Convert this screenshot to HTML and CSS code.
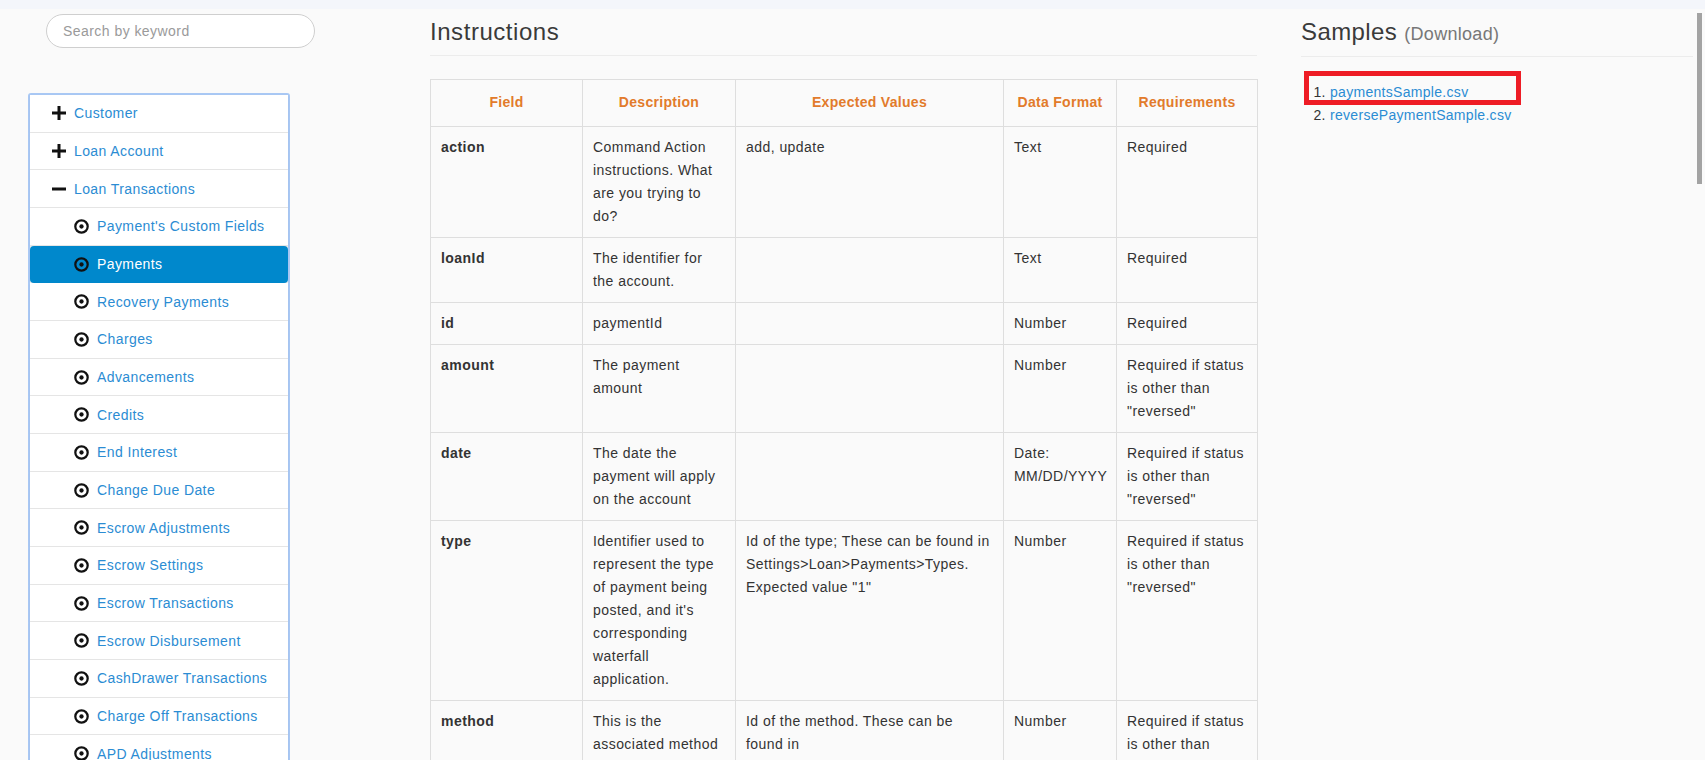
FILE: index.html
```html
<!DOCTYPE html>
<html lang="en">
<head>
<meta charset="utf-8">
<title>Payments - Import Instructions</title>
<link rel="stylesheet" href="styles.css">
</head>
<body>
<div class="topbar"></div>
<div class="layout">
  <aside class="sidebar">
    <input class="search" type="text" placeholder="Search by keyword">
    <ul class="nav">
      <li class="item top"><svg class="ico" width="14" height="14" viewBox="0 0 14 14"><rect x="5.5" y="0" width="3" height="14" fill="#111"/><rect x="0" y="5.5" width="14" height="3" fill="#111"/></svg><span>Customer</span></li>
      <li class="item top"><svg class="ico" width="14" height="14" viewBox="0 0 14 14"><rect x="5.5" y="0" width="3" height="14" fill="#111"/><rect x="0" y="5.5" width="14" height="3" fill="#111"/></svg><span>Loan Account</span></li>
      <li class="item top"><svg class="ico" width="14" height="14" viewBox="0 0 14 14"><rect x="0" y="5.5" width="14" height="3" fill="#111"/></svg><span>Loan Transactions</span></li>
      <li class="item sub"><svg class="dot" width="15" height="15" viewBox="0 0 16 16"><circle cx="8" cy="8" r="6.6" fill="none" stroke="#111" stroke-width="2.4"/><circle cx="8" cy="8" r="2.3" fill="#111"/></svg><span>Payment's Custom Fields</span></li>
      <li class="item sub active"><svg class="dot" width="15" height="15" viewBox="0 0 16 16"><circle cx="8" cy="8" r="6.6" fill="none" stroke="#111" stroke-width="2.4"/><circle cx="8" cy="8" r="2.3" fill="#111"/></svg><span>Payments</span></li>
      <li class="item sub"><svg class="dot" width="15" height="15" viewBox="0 0 16 16"><circle cx="8" cy="8" r="6.6" fill="none" stroke="#111" stroke-width="2.4"/><circle cx="8" cy="8" r="2.3" fill="#111"/></svg><span>Recovery Payments</span></li>
      <li class="item sub"><svg class="dot" width="15" height="15" viewBox="0 0 16 16"><circle cx="8" cy="8" r="6.6" fill="none" stroke="#111" stroke-width="2.4"/><circle cx="8" cy="8" r="2.3" fill="#111"/></svg><span>Charges</span></li>
      <li class="item sub"><svg class="dot" width="15" height="15" viewBox="0 0 16 16"><circle cx="8" cy="8" r="6.6" fill="none" stroke="#111" stroke-width="2.4"/><circle cx="8" cy="8" r="2.3" fill="#111"/></svg><span>Advancements</span></li>
      <li class="item sub"><svg class="dot" width="15" height="15" viewBox="0 0 16 16"><circle cx="8" cy="8" r="6.6" fill="none" stroke="#111" stroke-width="2.4"/><circle cx="8" cy="8" r="2.3" fill="#111"/></svg><span>Credits</span></li>
      <li class="item sub"><svg class="dot" width="15" height="15" viewBox="0 0 16 16"><circle cx="8" cy="8" r="6.6" fill="none" stroke="#111" stroke-width="2.4"/><circle cx="8" cy="8" r="2.3" fill="#111"/></svg><span>End Interest</span></li>
      <li class="item sub"><svg class="dot" width="15" height="15" viewBox="0 0 16 16"><circle cx="8" cy="8" r="6.6" fill="none" stroke="#111" stroke-width="2.4"/><circle cx="8" cy="8" r="2.3" fill="#111"/></svg><span>Change Due Date</span></li>
      <li class="item sub"><svg class="dot" width="15" height="15" viewBox="0 0 16 16"><circle cx="8" cy="8" r="6.6" fill="none" stroke="#111" stroke-width="2.4"/><circle cx="8" cy="8" r="2.3" fill="#111"/></svg><span>Escrow Adjustments</span></li>
      <li class="item sub"><svg class="dot" width="15" height="15" viewBox="0 0 16 16"><circle cx="8" cy="8" r="6.6" fill="none" stroke="#111" stroke-width="2.4"/><circle cx="8" cy="8" r="2.3" fill="#111"/></svg><span>Escrow Settings</span></li>
      <li class="item sub"><svg class="dot" width="15" height="15" viewBox="0 0 16 16"><circle cx="8" cy="8" r="6.6" fill="none" stroke="#111" stroke-width="2.4"/><circle cx="8" cy="8" r="2.3" fill="#111"/></svg><span>Escrow Transactions</span></li>
      <li class="item sub"><svg class="dot" width="15" height="15" viewBox="0 0 16 16"><circle cx="8" cy="8" r="6.6" fill="none" stroke="#111" stroke-width="2.4"/><circle cx="8" cy="8" r="2.3" fill="#111"/></svg><span>Escrow Disbursement</span></li>
      <li class="item sub"><svg class="dot" width="15" height="15" viewBox="0 0 16 16"><circle cx="8" cy="8" r="6.6" fill="none" stroke="#111" stroke-width="2.4"/><circle cx="8" cy="8" r="2.3" fill="#111"/></svg><span>CashDrawer Transactions</span></li>
      <li class="item sub"><svg class="dot" width="15" height="15" viewBox="0 0 16 16"><circle cx="8" cy="8" r="6.6" fill="none" stroke="#111" stroke-width="2.4"/><circle cx="8" cy="8" r="2.3" fill="#111"/></svg><span>Charge Off Transactions</span></li>
      <li class="item sub"><svg class="dot" width="15" height="15" viewBox="0 0 16 16"><circle cx="8" cy="8" r="6.6" fill="none" stroke="#111" stroke-width="2.4"/><circle cx="8" cy="8" r="2.3" fill="#111"/></svg><span>APD Adjustments</span></li>
    </ul>
  </aside>

  <main class="main">
    <h2 class="heading">Instructions</h2>
    <table class="grid">
      <colgroup>
        <col class="c1"><col class="c2"><col class="c3"><col class="c4"><col class="c5">
      </colgroup>
      <thead>
        <tr><th>Field</th><th>Description</th><th>Expected Values</th><th>Data Format</th><th>Requirements</th></tr>
      </thead>
      <tbody>
        <tr><td class="f">action</td><td>Command Action instructions. What are you trying to do?</td><td>add, update</td><td>Text</td><td>Required</td></tr>
        <tr><td class="f">loanId</td><td>The identifier for the account.</td><td></td><td>Text</td><td>Required</td></tr>
        <tr><td class="f">id</td><td>paymentId</td><td></td><td>Number</td><td>Required</td></tr>
        <tr><td class="f">amount</td><td>The payment amount</td><td></td><td>Number</td><td>Required if status is other than "reversed"</td></tr>
        <tr><td class="f">date</td><td>The date the payment will apply on the account</td><td></td><td>Date: MM/DD/YYYY</td><td>Required if status is other than "reversed"</td></tr>
        <tr><td class="f">type</td><td>Identifier used to represent the type of payment being posted, and it's corresponding waterfall application.</td><td>Id of the type; These can be found in Settings&gt;Loan&gt;Payments&gt;Types. Expected value "1"</td><td>Number</td><td>Required if status is other than "reversed"</td></tr>
        <tr><td class="f">method</td><td>This is the associated method used to make the payment.</td><td>Id of the method. These can be found in Settings&gt;Loan&gt;Payments&gt;Methods.</td><td>Number</td><td>Required if status is other than "reversed"</td></tr>
      </tbody>
    </table>
  </main>

  <section class="samples">
    <h2 class="heading sh">Samples <small>(Download)</small></h2>
    <ol class="files">
      <li><a href="#">paymentsSample.csv</a></li>
      <li><a href="#">reversePaymentSample.csv</a></li>
    </ol>
    <div class="mark"></div>
  </section>
</div>
<div class="scrollthumb"></div>
</body>
</html>
```

FILE: styles.css
```css
html, body {
  margin: 0;
  padding: 0;
  height: 760px;
  overflow: hidden;
}
body {
  background: #fafafa;
  font-family: "Liberation Sans", Arial, sans-serif;
  font-size: 14px;
  letter-spacing: 0.45px;
  color: #333;
}
.topbar {
  height: 9px;
  background: #f4f6fb;
}
.layout {
  display: flex;
  align-items: flex-start;
}

/* sidebar */
.sidebar {
  width: 430px;
  flex: none;
  box-sizing: border-box;
  padding-left: 28px;
}
.search {
  display: block;
  box-sizing: border-box;
  margin: 5px 0 0 18px;
  width: 269px;
  height: 34px;
  border: 1px solid #cfcfcf;
  border-radius: 17px;
  background: #fff;
  padding: 0 16px;
  font-family: "Liberation Sans", Arial, sans-serif;
  font-size: 14px;
  letter-spacing: 0.45px;
  color: #333;
  outline: none;
}
.search::placeholder {
  color: #9a9a9a;
}
.nav {
  list-style: none;
  margin: 45px 0 0 0;
  padding: 0;
  width: 262px;
  box-sizing: border-box;
  border: 2px solid #a9c8f4;
  border-radius: 3px;
  background: #f3f3f3;
}
.item {
  display: flex;
  align-items: center;
  height: 37.68px;
  box-sizing: border-box;
  background: #fff;
  color: #2b8cd3;
  letter-spacing: 0.4px;
  border-bottom: 1px solid #e6e6e6;
  box-shadow: 0 1px 2px rgba(0, 0, 0, 0.06);
  position: relative;
}
.item.top {
  padding-left: 22px;
}
.item.sub {
  padding-left: 44px;
}
.ico {
  flex: none;
  margin-right: 8px;
}
.dot {
  flex: none;
  margin-right: 8px;
}
.item.active {
  background: #0088cc;
  color: #fff;
  border-radius: 4px;
  border-bottom-color: transparent;
}

/* main */
.main {
  width: 827px;
  flex: none;
}
.heading {
  margin: 0;
  padding: 9.5px 0 9.6px 0;
  font-size: 24px;
  font-weight: normal;
  line-height: 26.4px;
  letter-spacing: 0.55px;
  color: #3a3a3a;
  border-bottom: 1px solid #ececec;
}
.grid {
  margin-top: 23px;
  width: 827px;
  table-layout: fixed;
  border-collapse: collapse;
  border: 1px solid #dedede;
}
.c1 { width: 152px; }
.c2 { width: 153px; }
.c3 { width: 268px; }
.c4 { width: 113px; }
.c5 { width: 141px; }
.grid th {
  padding: 11.5px 4px;
  line-height: 23px;
  text-align: center;
  font-weight: bold;
  color: #e27b2b;
  letter-spacing: 0.3px;
  border: 1px solid #dedede;
}
.grid td {
  padding: 9px 10px;
  line-height: 23px;
  vertical-align: top;
  border: 1px solid #dedede;
  color: #333;
}
.grid td:nth-child(4) {
  padding-right: 5px;
}
.grid td:nth-child(5) {
  padding-right: 8px;
}
.grid td.f {
  font-weight: bold;
}

/* samples */
.samples {
  position: relative;
  margin-left: 44px;
  width: 392px;
  flex: none;
}
.heading.sh {
  padding-bottom: 8.6px;
  letter-spacing: 0.4px;
}
.heading small {
  font-size: 18px;
  color: #777;
  letter-spacing: 0.3px;
}
.files {
  margin: 24px 0 0 0;
  padding-left: 29px;
  line-height: 23px;
  font-size: 14px;
  letter-spacing: 0.3px;
  color: #333;
}
.files a {
  color: #2b8cd3;
  text-decoration: none;
}
.mark {
  position: absolute;
  left: 3px;
  top: 62px;
  width: 217px;
  height: 34px;
  box-sizing: border-box;
  border: 5.5px solid #ee1c25;
}
.scrollthumb {
  position: fixed;
  right: 3px;
  top: 13px;
  width: 5px;
  height: 171px;
  background: #a3a3a3;
}
```
